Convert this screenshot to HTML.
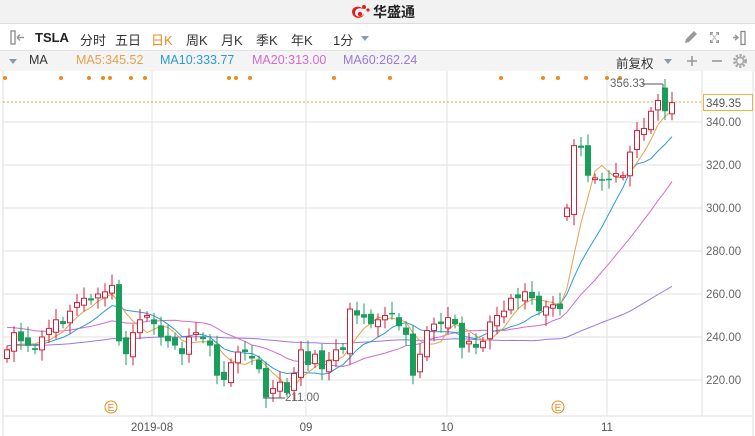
<!DOCTYPE html>
<html><head><meta charset="utf-8">
<style>
*{margin:0;padding:0;box-sizing:border-box}
body{width:755px;height:436px;overflow:hidden;background:#fff;font-family:"Liberation Sans","Noto Sans CJK SC",sans-serif;position:relative}
.top{position:absolute;left:0;top:0;width:755px;height:24px;background:#f2f2f2;border-bottom:1px solid #ddd}
.logo{position:absolute;left:349px;top:2px;font-size:14px;font-weight:bold;color:#222;display:flex;align-items:center;gap:2px}
.tb{position:absolute;left:0;top:24px;width:755px;height:27px;background:#fff;border-bottom:1px solid #e3e3e3;font-size:13px;color:#333}
.tb span{position:absolute;top:6px}
.ma{position:absolute;left:0;top:51px;width:755px;height:20px;background:#f4f4f4;font-size:12.5px}
.ma span{position:absolute;top:2px}
svg{position:absolute;left:0;top:0}
</style></head><body>
<div class="top"><div class="logo"><svg width="22" height="18" viewBox="0 0 22 18" style="position:static"><path d="M3 9 C3 3,11 2,14 6 C10 4,6 6,6 10 C6 14,12 15,15 11 C14 16,4 17,3 9Z" fill="#e0201c"/><circle cx="15" cy="4" r="2" fill="#e0201c"/><circle cx="19" cy="7" r="1.6" fill="#e0201c"/><circle cx="11" cy="11" r="2.2" fill="#e0201c"/></svg><span>华盛通</span></div></div>
<div class="tb">
<svg width="22" height="27" style="left:8px"><rect x="3" y="7" width="4" height="13" fill="none" stroke="#888" stroke-width="1.3"/><path d="M9 13.5h7M9 13.5l3-3M9 13.5l3 3" stroke="#999" stroke-width="1.5" fill="none"/></svg>
<span style="left:35px;font-weight:bold;color:#222">TSLA</span>
<span style="left:80px">分时</span><span style="left:115px">五日</span><span style="left:151px;color:#f08a1d">日K</span><span style="left:186px">周K</span><span style="left:221px">月K</span><span style="left:256px">季K</span><span style="left:291px">年K</span><span style="left:333px">1分</span>
<svg width="12" height="27" style="left:359px"><path d="M2 12h8l-4 5z" fill="#8a9aaa"/></svg>
<svg width="80" height="27" style="left:680px"><path d="M5 19l1-4 8-8 3 3-8 8z" fill="#999"/><path d="M30 8h3v1.5h-1.5V11H30zM39 8h-3v1.5h1.5V11H39zM30 19h3v-1.5h-1.5V16H30zM39 19h-3v-1.5h1.5V16H39z" fill="#999"/><path d="M32 10l5 7M37 10l-5 7" stroke="#bbb" stroke-width="1"/><path d="M53 13.5h5M55 11l3 2.5-3 2.5" stroke="#999" stroke-width="1.6" fill="none"/><rect x="61" y="7.5" width="4" height="13" fill="none" stroke="#888" stroke-width="1.3"/></svg>
</div>
<div class="ma">
<svg width="12" height="20" style="left:8px"><path d="M1 8h8l-4 5z" fill="#8a9aaa"/></svg>
<span style="left:29px;color:#333">MA</span>
<span style="left:76px;color:#e6a14c">MA5:345.52</span>
<span style="left:160px;color:#2a9ad6">MA10:333.77</span>
<span style="left:252px;color:#d46ad0">MA20:313.00</span>
<span style="left:343px;color:#9a78e0">MA60:262.24</span>
<span style="left:616px;color:#333">前复权</span>
<svg width="70" height="20" style="left:663px"><path d="M1 8h8l-4 5z" fill="#8a9aaa"/><path d="M24 10h10M29 5v10" stroke="#999" stroke-width="1.6"/><path d="M49 10h10" stroke="#999" stroke-width="1.6"/></svg>
<svg width="20" height="20" style="left:730px"><circle cx="10" cy="10" r="5.5" fill="none" stroke="#aaa" stroke-width="3" stroke-dasharray="2.2 1.4"/><circle cx="10" cy="10" r="3.5" fill="none" stroke="#aaa" stroke-width="1.6"/></svg>
</div>
<svg id="c" width="755" height="436" style="top:0"></svg>
<script>
const s=document.getElementById('c');let h='';
const Y=p=>122+(340-p)*2.15;
[122,165,208,251,294,337,380].forEach(y=>h+=`<line x1="3" x2="702" y1="${y}" y2="${y}" stroke="#e2e2e2"/>`);
[152,306,447,607].forEach(x=>h+=`<line x1="${x}" x2="${x}" y1="71" y2="416" stroke="#e2e2e2"/>`);
h+=`<line x1="3" x2="3" y1="71" y2="436" stroke="#ddd"/><line x1="702" x2="702" y1="71" y2="416" stroke="#ddd"/><line x1="753" x2="753" y1="71" y2="436" stroke="#ddd"/><line x1="3" x2="753" y1="416" y2="416" stroke="#ddd"/>`;
[340,320,300,280,260,240,220].forEach(p=>h+=`<text x="706" y="${Y(p)+4}" font-size="11.5" fill="#666" font-family="Liberation Sans">${p}.00</text>`);
[[152,'2019-08'],[306,'09'],[447,'10'],[607,'11']].forEach(a=>h+=`<text x="${a[0]}" y="431" font-size="11.5" fill="#555" text-anchor="middle" font-family="Liberation Sans">${a[1]}</text>`);
[5,61,89,103,110,131,145,229,236,250,334,390,501,543,558,586,607,620].forEach(x=>h+=`<circle cx="${x}" cy="78" r="2" fill="#f08a1d"/>`);
h+=`<line x1="3" x2="702" y1="102" y2="102" stroke="#e8a43a" stroke-dasharray="2 2"/>`;
h+=`<rect x="703.5" y="94.5" width="49" height="16" fill="#fff" stroke="#f0b040"/><text x="706" y="107" font-size="11.5" fill="#555" font-family="Liberation Sans">349.35</text>`;
const C=[234,242,238,236,234,240,244,248,246,252,256,258,257,260,261,264,238,232,242,248,250,246,240,238,236,232,240,242,239,236,222,220,228,233,233,230,225,212,216,219,214,223,234,227,232,225,229,234,234,253,250,249,246,248,250,251,245,241,222,232,243,246,246,249,246,235,238,235,238,247,250,252,258,258,261,258,252,254,255,253,300,329,328,315,314,313,313,316,315,326,336,337,345,350,345,349];
const O=C.map((c,i)=>{if(i==0)return 230;let p=C[i-1];if(i==80)return 296;if(i==81)return 297;if(i==94)return 356;return p+((i*37)%7-3)*0.6;});
const Xs=i=>7+i*7;
function ma(n,pad){let r=[];for(let i=0;i<C.length;i++){let s=0;for(let k=0;k<n;k++){let j=i-k;s+=j>=0?C[j]:pad;}r.push(s/n);}return r;}
const pl=(a,col)=>`<polyline fill="none" stroke="${col}" stroke-width="1" points="${a.map((v,i)=>Xs(i)+','+Y(v).toFixed(1)).join(' ')}"/>`;
h+=pl(ma(60,236),'#9a78e0');
h+=pl(ma(20,245),'#d46ad0');
h+=pl(ma(10,236),'#2a9ad6');
h+=pl(ma(5,234),'#e6a14c');
C.forEach((c,i)=>{const o=O[i];const up=c>=o;const x=Xs(i);const hi=Math.max(c,o)+2+(i*13)%4,lo=Math.min(c,o)-2-(i*7)%4;
const col=up?'#d0213a':'#1a9e5c';const t=Y(Math.max(c,o)),b=Y(Math.min(c,o));const hh=Math.max(b-t,1.5);
h+=`<line x1="${x}" x2="${x}" y1="${Y(hi)}" y2="${Y(lo)}" stroke="${col}"/>`;
h+=up?`<rect x="${x-2.5}" y="${t}" width="5" height="${hh}" fill="#fff" stroke="${col}"/>`:`<rect x="${x-3}" y="${t}" width="6" height="${hh}" fill="${col}"/>`;});
h+=`<line x1="263" x2="285" y1="398" y2="398" stroke="#555"/><text x="285" y="401" font-size="11.5" fill="#666" font-family="Liberation Sans">211.00</text>`;
h+=`<line x1="642" x2="663" y1="84" y2="84" stroke="#555"/><line x1="663" x2="663" y1="84" y2="89" stroke="#555"/><text x="610" y="87" font-size="11.5" fill="#666" font-family="Liberation Sans">356.33</text>`;
[111,558].forEach(x=>h+=`<circle cx="${x}" cy="407" r="6" fill="#fff" stroke="#f08a1d"/><text x="${x}" y="411" font-size="10" fill="#f08a1d" text-anchor="middle" font-family="Liberation Sans">E</text>`);
s.innerHTML=h;
</script>
</body></html>
